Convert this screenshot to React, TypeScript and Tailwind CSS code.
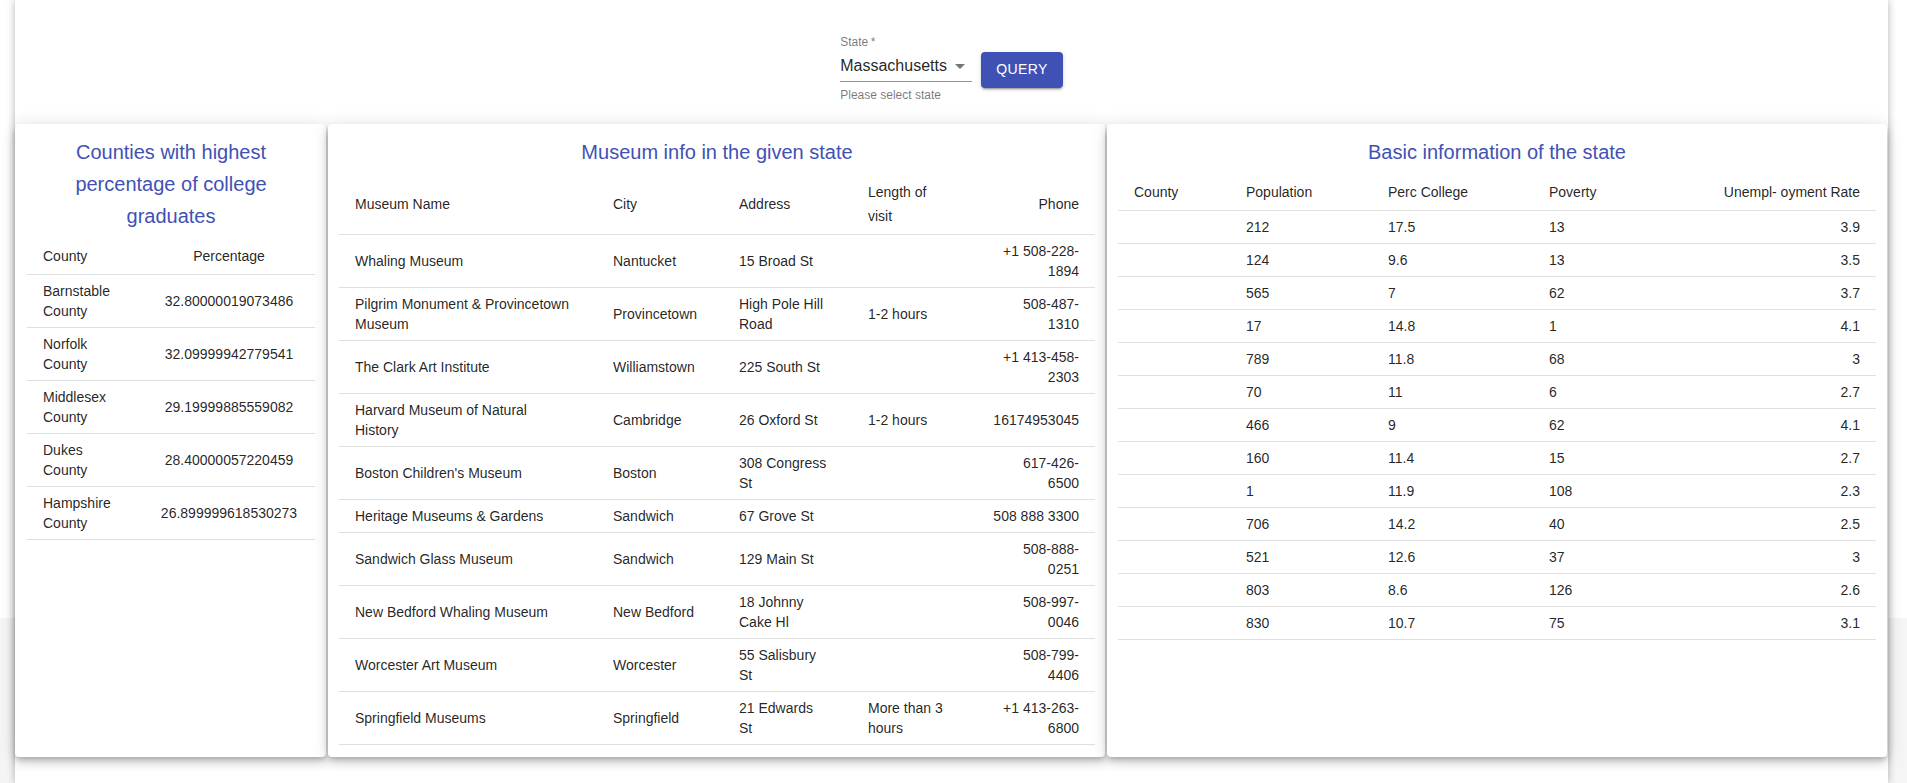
import React from 'react'

const counties = [
  { name: 'Barnstable County', pct: '32.80000019073486' },
  { name: 'Norfolk County', pct: '32.09999942779541' },
  { name: 'Middlesex County', pct: '29.19999885559082' },
  { name: 'Dukes County', pct: '28.40000057220459' },
  { name: 'Hampshire County', pct: '26.899999618530273' },
]

const museums = [
  { name: 'Whaling Museum', city: 'Nantucket', address: '15 Broad St', length: '', phone: '+1 508-228-1894' },
  { name: 'Pilgrim Monument & Provincetown Museum', city: 'Provincetown', address: 'High Pole Hill Road', length: '1-2 hours', phone: '508-487-1310' },
  { name: 'The Clark Art Institute', city: 'Williamstown', address: '225 South St', length: '', phone: '+1 413-458-2303' },
  { name: 'Harvard Museum of Natural History', city: 'Cambridge', address: '26 Oxford St', length: '1-2 hours', phone: '16174953045' },
  { name: "Boston Children's Museum", city: 'Boston', address: '308 Congress St', length: '', phone: '617-426-6500' },
  { name: 'Heritage Museums & Gardens', city: 'Sandwich', address: '67 Grove St', length: '', phone: '508 888 3300' },
  { name: 'Sandwich Glass Museum', city: 'Sandwich', address: '129 Main St', length: '', phone: '508-888-0251' },
  { name: 'New Bedford Whaling Museum', city: 'New Bedford', address: '18 Johnny Cake Hl', length: '', phone: '508-997-0046' },
  { name: 'Worcester Art Museum', city: 'Worcester', address: '55 Salisbury St', length: '', phone: '508-799-4406' },
  { name: 'Springfield Museums', city: 'Springfield', address: '21 Edwards St', length: 'More than 3 hours', phone: '+1 413-263-6800' },
]

const stateRows = [
  ['212', '17.5', '13', '3.9'],
  ['124', '9.6', '13', '3.5'],
  ['565', '7', '62', '3.7'],
  ['17', '14.8', '1', '4.1'],
  ['789', '11.8', '68', '3'],
  ['70', '11', '6', '2.7'],
  ['466', '9', '62', '4.1'],
  ['160', '11.4', '15', '2.7'],
  ['1', '11.9', '108', '2.3'],
  ['706', '14.2', '40', '2.5'],
  ['521', '12.6', '37', '3'],
  ['803', '8.6', '126', '2.6'],
  ['830', '10.7', '75', '3.1'],
]

// cell styles, alignment added per cell
const th = 'py-[6px] pl-4 pr-6 last:pr-4 font-normal text-[14px] leading-[24px] text-[rgba(0,0,0,0.87)] border-b border-[#e0e0e0] align-middle'
const td = 'py-[6px] pl-4 pr-6 last:pr-4 text-[14px] leading-[20px] text-[rgba(0,0,0,0.87)] border-b border-[#e0e0e0] align-middle'
const card = 'rounded bg-white pt-[12px] shadow-[0_3px_5px_-1px_rgba(0,0,0,0.2),0_6px_10px_0_rgba(0,0,0,0.14),0_1px_18px_0_rgba(0,0,0,0.12)]'
const title = 'text-[20px] leading-[32px] text-[#3f51b5] text-center mb-[6px]'

const App = () => {
  return (
    <div className="h-screen overflow-hidden bg-[linear-gradient(to_bottom,#ffffff_618px,#f5f5f5_618px)] font-['Liberation_Sans',Arial,sans-serif]">
      <div className="ml-[15px] w-[1873px] h-full bg-white shadow-[0_0_8px_rgba(0,0,0,0.3)]">
        {/* state picker */}
        <div className="flex justify-center items-center gap-[9px] pt-[34px] pb-[19px]">
          <div className="flex flex-col w-[132px]">
            <label className="h-[16px] pt-[1.5px] text-[12px] leading-[12px] text-[rgba(0,0,0,0.54)]">State&thinsp;*</label>
            <div className="flex items-center justify-between pt-[6px] pb-[6px] border-b border-[rgba(0,0,0,0.42)]">
              <span className="text-[16px] leading-[19px] text-[rgba(0,0,0,0.87)]">Massachusetts</span>
              <svg width="24" height="24" viewBox="0 0 24 24" className="-my-[3px]">
                <path d="M7 10l5 5 5-5z" fill="rgba(0,0,0,0.54)" />
              </svg>
            </div>
            <p className="mt-[3px] text-[12px] leading-[20px] text-[rgba(0,0,0,0.54)]">Please select state</p>
          </div>
          <button className="h-[36px] px-[15px] rounded bg-[#3f51b5] text-white text-[14px] font-medium uppercase tracking-[0.02857em] leading-[1.75] shadow-[0_3px_1px_-2px_rgba(0,0,0,0.2),0_2px_2px_0_rgba(0,0,0,0.14),0_1px_5px_0_rgba(0,0,0,0.12)]">
            Query
          </button>
        </div>

        <div className="flex gap-[2px] h-[633px]">
          {/* counties */}
          <div className={`${card} w-[311px] pl-[12px] pr-[11px]`}>
            <h2 className={`${title} px-4`}>Counties with highest percentage of college graduates</h2>
            <table className="w-full table-fixed">
              <colgroup>
                <col className="w-[116px]" />
                <col className="w-[172px]" />
              </colgroup>
              <thead>
                <tr>
                  <th className={`${th} text-left`}>County</th>
                  <th className={`${th} text-center`}>Percentage</th>
                </tr>
              </thead>
              <tbody>
                {counties.map((c) => (
                  <tr key={c.name}>
                    <td className={`${td} text-left`}>{c.name}</td>
                    <td className={`${td} text-center`}>{c.pct}</td>
                  </tr>
                ))}
              </tbody>
            </table>
          </div>

          {/* museums */}
          <div className={`${card} w-[777px] pl-[11px] pr-[10px]`}>
            <h2 className={title}>Museum info in the given state</h2>
            <table className="w-full table-fixed">
              <colgroup>
                <col className="w-[258px]" />
                <col className="w-[126px]" />
                <col className="w-[129px]" />
                <col className="w-[125px]" />
                <col className="w-[118px]" />
              </colgroup>
              <thead>
                <tr>
                  <th className={`${th} text-left`}>Museum Name</th>
                  <th className={`${th} text-left`}>City</th>
                  <th className={`${th} text-left`}>Address</th>
                  <th className={`${th} text-left`}>Length of visit</th>
                  <th className={`${th} text-right`}>Phone</th>
                </tr>
              </thead>
              <tbody>
                {museums.map((m) => (
                  <tr key={m.name}>
                    <td className={`${td} text-left`}>{m.name}</td>
                    <td className={`${td} text-left`}>{m.city}</td>
                    <td className={`${td} text-left`}>{m.address}</td>
                    <td className={`${td} text-left`}>{m.length}</td>
                    <td className={`${td} text-right`}>{m.phone}</td>
                  </tr>
                ))}
              </tbody>
            </table>
          </div>

          {/* basic info */}
          <div className={`${card} w-[780px] px-[11px]`}>
            <h2 className={title}>Basic information of the state</h2>
            <table className="w-full table-fixed">
              <colgroup>
                <col className="w-[112px]" />
                <col className="w-[142px]" />
                <col className="w-[161px]" />
                <col className="w-[168px]" />
                <col className="w-[175px]" />
              </colgroup>
              <thead>
                <tr>
                  <th className={`${th} text-left`}>County</th>
                  <th className={`${th} text-left`}>Population</th>
                  <th className={`${th} text-left`}>Perc College</th>
                  <th className={`${th} text-left`}>Poverty</th>
                  <th className={`${th} text-right`}>Unempl- oyment Rate</th>
                </tr>
              </thead>
              <tbody>
                {stateRows.map((r, i) => (
                  <tr key={i}>
                    <td className={`${td} text-left`}></td>
                    <td className={`${td} text-left`}>{r[0]}</td>
                    <td className={`${td} text-left`}>{r[1]}</td>
                    <td className={`${td} text-left`}>{r[2]}</td>
                    <td className={`${td} text-right`}>{r[3]}</td>
                  </tr>
                ))}
              </tbody>
            </table>
          </div>
        </div>
      </div>
    </div>
  )
}

export default App
